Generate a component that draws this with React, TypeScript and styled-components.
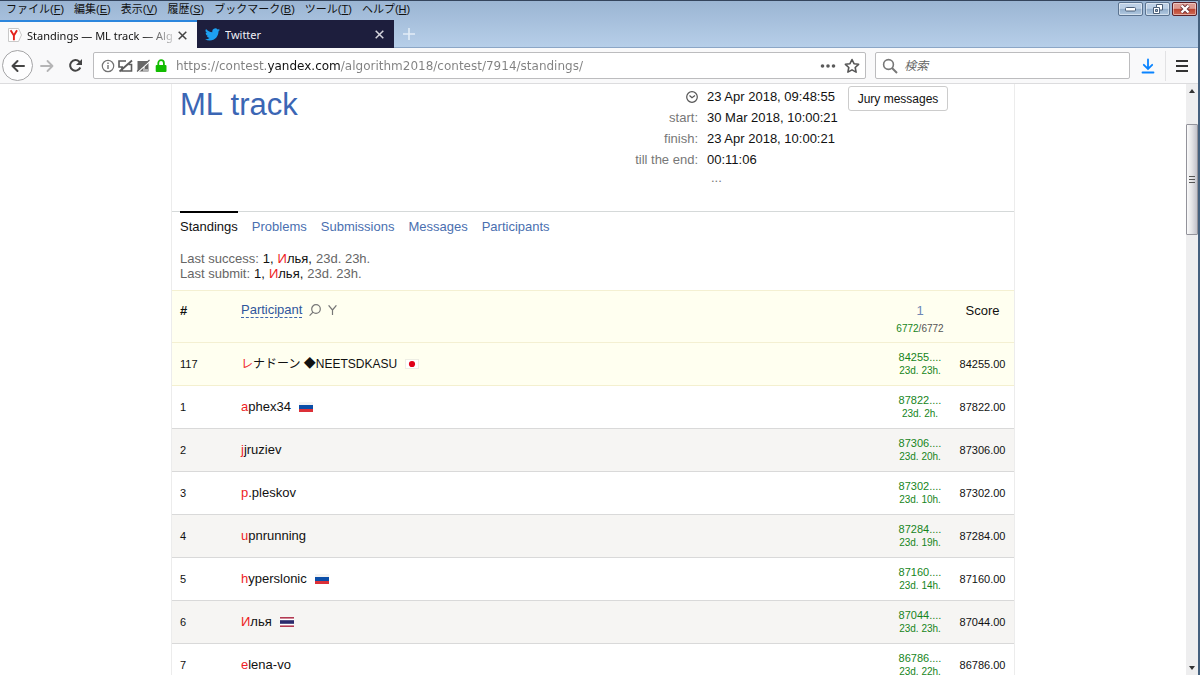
import React from "react";
import styled, { createGlobalStyle } from "styled-components";

const sans = `"Liberation Sans", Arial, "Noto Sans CJK JP", sans-serif`;
const ui = `"DejaVu Sans", Verdana, "Noto Sans CJK JP", sans-serif`;
const tabFont = `"Noto Sans", Tahoma, "Noto Sans CJK JP", sans-serif`;

const GlobalStyle = createGlobalStyle`
  * { box-sizing: border-box; }
  body { margin: 0; background: #fff; font-family: ${sans}; font-size: 13px; color: #111; }
  button, input { font: inherit; color: inherit; }
  button { padding: 0; border: 0; background: none; cursor: pointer; }
  svg { display: block; flex: none; }
`;

const Window = styled.div`
  display: flex;
  flex-direction: column;
  height: 100vh;
  overflow: hidden;
  border-right: 2px solid #44607e;
`;

const TitleArea = styled.header`
  background: linear-gradient(#9bb5d3, #b7cfe9);
  border-top: 1px solid #34445c;
`;

const MenuBar = styled.nav`
  display: flex;
  align-items: center;
  gap: 10px;
  height: 19px;
  padding: 0 0 4px 6px;
`;

const MenuItem = styled.button`
  font-size: 11px;
  line-height: 14px;
  white-space: nowrap;
  color: #111;
`;

const WindowButtons = styled.div`
  display: flex;
  align-self: flex-start;
  gap: 2px;
  margin: 1px 1px 0 auto;
`;

const WindowButton = styled.button<{ $close?: boolean }>`
  display: grid;
  place-items: center;
  width: 25px;
  height: 14px;
  border: 1px solid ${(p) => (p.$close ? "#5c2028" : "#5b7390")};
  border-radius: 2px;
  box-shadow: inset 0 0 0 1px rgba(255, 255, 255, 0.45);
  background: ${(p) =>
    p.$close
      ? "linear-gradient(#dd9a90 0 45%, #bd4430 50%, #cf6a55)"
      : "linear-gradient(#bdd0e6 0 45%, #93aecb 50%, #b3cae2)"};
`;

const TabStrip = styled.div`
  display: flex;
  height: 28px;
  border-bottom: 1px solid #8ba6c6;
`;

const Tab = styled.div<{ $active?: boolean }>`
  display: flex;
  align-items: center;
  flex: 0 1 197px;
  min-width: 0;
  gap: 5px;
  height: 28px;
  padding: 0 10px 0 8px;
  font-family: ${tabFont};
  font-size: 11px;
  border-top: ${(p) => (p.$active ? "2px solid #2c86dd" : "0")};
  background: ${(p) => (p.$active ? "#f9f9fa" : "#1d1e3d")};
  color: ${(p) => (p.$active ? "#111" : "#f0f0f5")};
`;

const TabTitle = styled.span<{ $fade?: boolean }>`
  flex: 1;
  min-width: 0;
  overflow: hidden;
  white-space: nowrap;
  ${(p) => p.$fade && "mask-image: linear-gradient(90deg, #000 80%, rgba(0, 0, 0, 0.2));"}
`;

const NewTab = styled.button`
  display: grid;
  place-items: center;
  width: 30px;
`;

const Toolbar = styled.div`
  display: flex;
  align-items: center;
  flex: none;
  height: 36px;
  padding-left: 2px;
  background: #f9f9fa;
  border-bottom: 1px solid #dcdcde;
`;

const BackButton = styled.button`
  display: grid;
  place-items: center;
  width: 31px;
  height: 31px;
  border: 1px solid #a4a4a6;
  border-radius: 50%;
  background: #fdfdfe;
`;

const ToolButton = styled.button<{ $width: number }>`
  display: grid;
  place-items: center;
  width: ${(p) => p.$width}px;
  height: 28px;
`;

const Field = styled.div<{ $grow: number }>`
  display: flex;
  align-items: center;
  flex: ${(p) => p.$grow} 1 0;
  min-width: 0;
  height: 27px;
  margin-right: 9px;
  padding: 0 0 0 6px;
  gap: 3px;
  border: 1px solid #bcbcbe;
  border-radius: 2px;
  background: #fff;
  font-family: ${ui};
  font-size: 12px;
`;

const UrlInput = styled.input`
  flex: 1;
  min-width: 0;
  margin-left: 4px;
  padding: 0;
  border: 0;
  outline: 0;
  color: #777;
  background: linear-gradient(90deg, #808080 92px, #111 92px 165px, #808080 165px);
  background-clip: text;
  -webkit-text-fill-color: transparent;
`;

const SearchInput = styled.input`
  flex: 1;
  min-width: 0;
  margin-left: 3px;
  padding: 0;
  border: 0;
  outline: 0;
  &::placeholder {
    font-style: italic;
    color: #666;
  }
`;

const Divider = styled.span`
  width: 1px;
  height: 30px;
  background: #e2e2e4;
`;

const Viewport = styled.div`
  display: flex;
  flex: 1;
  min-height: 0;
`;

const Scroller = styled.main`
  flex: 1;
  overflow: hidden;
  background: #fff;
`;

const Sheet = styled.div`
  max-width: 844px;
  margin: 0 auto;
  border: solid #ececec;
  border-width: 0 1px;
`;

const ContestHeader = styled.section`
  display: flex;
  align-items: flex-start;
  height: 127px;
  padding: 2px 66px 0 8px;
`;

const Title = styled.h1`
  flex: 1;
  margin: 0;
  font-size: 31px;
  font-weight: 400;
  line-height: 38px;
  color: #3b66b4;
`;

const Times = styled.dl`
  display: grid;
  grid-template-columns: auto 126px;
  column-gap: 9px;
  margin: 0 15px 0 0;
  line-height: 21px;
  white-space: nowrap;
`;

const TimeLabel = styled.dt`
  display: flex;
  align-items: center;
  justify-content: flex-end;
  color: #777;
`;

const TimeValue = styled.dd`
  margin: 0;
`;

const More = styled.button`
  grid-column: 2;
  justify-self: start;
  margin-left: 4px;
  line-height: 16px;
  color: #777;
`;

const JuryButton = styled.button`
  width: 100px;
  height: 25px;
  border: 1px solid #ccc;
  border-radius: 3px;
  background: #fff;
  font-size: 12px;
`;

const Nav = styled.nav`
  display: flex;
  gap: 14px;
  padding-left: 8px;
  border-top: 1px solid #d5d9d9;
`;

const NavLink = styled.a<{ $active?: boolean }>`
  margin-top: -1px;
  padding-top: 5px;
  border-top: 2px solid ${(p) => (p.$active ? "#000" : "transparent")};
  line-height: 18px;
  text-decoration: none;
  color: ${(p) => (p.$active ? "#111" : "#4a6fb0")};
`;

const LastInfo = styled.div`
  padding: 15px 8px 9px;
  line-height: 15px;
  color: #666;
`;

const LastLine = styled.p`
  display: flex;
  gap: 4px;
  margin: 0;
`;

const Dark = styled.span`
  color: #111;
`;

const Red = styled.span`
  color: #ee1c25;
`;

const Standings = styled.table`
  width: 100%;
  border-collapse: collapse;
  table-layout: fixed;
`;

const Row = styled.tr<{ $tone: "own" | "plain" | "striped" }>`
  height: 43px;
  background: ${(p) => ({ own: "#fffff0", plain: "#fff", striped: "#f6f5f3" })[p.$tone]};
  border-bottom: 1px solid ${(p) => (p.$tone === "own" ? "#f4f0cf" : "#d9d9d9")};
`;

const HeadRow = styled.tr`
  height: 52px;
  background: #fffff0;
  border: solid #f4f0d2;
  border-width: 1px 0;
`;

const HeadCell = styled.th<{ $width?: number; $align?: "center"; $bold?: boolean }>`
  width: ${(p) => (p.$width ? `${p.$width}px` : "auto")};
  padding: ${(p) => (p.$align ? "11px 0 0" : "11px 0 0 8px")};
  vertical-align: top;
  text-align: ${(p) => p.$align ?? "left"};
  font-weight: ${(p) => (p.$bold ? 700 : 400)};
  line-height: 18px;
`;

const HeadFlex = styled.div`
  display: flex;
  align-items: center;
  gap: 7px;
`;

const SortLink = styled.a`
  line-height: 15px;
  border-bottom: 1px dashed #3d66ad;
  text-decoration: none;
  color: #2f569c;
`;

const TaskLink = styled.a`
  display: block;
  margin-bottom: 2px;
  text-decoration: none;
  color: #6f87b5;
`;

const Small = styled.div<{ $color?: string }>`
  font-size: 10px;
  line-height: 13px;
  color: ${(p) => p.$color ?? "#16851b"};
`;

const Solved = styled.span`
  color: #16851b;
`;

const Rank = styled.td`
  padding: 0 0 0 8px;
  font-size: 11px;
`;

const NameCell = styled.td<{ $small?: boolean }>`
  padding: 0 0 0 8px;
  font-size: ${(p) => (p.$small ? 12 : 13)}px;
`;

const NameFlex = styled.div`
  display: flex;
  align-items: center;
  gap: 8px;
  line-height: 18px;
`;

const Result = styled.td`
  padding: 0;
  text-align: center;
  font-size: 11px;
  line-height: 13px;
  color: #16851b;
`;

const Score = styled.td`
  padding: 0;
  text-align: center;
  font-size: 11px;
`;

const Scrollbar = styled.div`
  display: flex;
  flex-direction: column;
  align-items: center;
  justify-content: space-between;
  flex: none;
  width: 12px;
  padding: 5px 0;
  background: #eeeeef;
`;

const ThumbTrack = styled.div`
  flex: 1;
  width: 12px;
  padding-top: 31px;
`;

const Thumb = styled.div`
  display: grid;
  place-items: center;
  height: 111px;
  border: 1px solid #93939b;
  border-radius: 1px;
  background: linear-gradient(90deg, #fafafa, #e3e3e6 50%, #c2c2ca);
`;

type Flag = "jp" | "ru" | "th";

const FlagIcon = ({ code }: { code: Flag }) => (
  <svg width="14" height="10" viewBox="0 0 14 10" role="img" aria-label={code}>
    {code === "jp" && (
      <>
        <rect x=".5" y=".5" width="13" height="9" fill="#fff" stroke="#eeeee4" />
        <circle cx="7" cy="5" r="3.1" fill="#e00018" />
      </>
    )}
    {code === "ru" && (
      <>
        <rect width="14" height="10" fill="#f2f2f2" />
        <rect y="3" width="14" height="4" fill="#0b4ea8" />
        <rect y="7" width="14" height="3" fill="#dc3038" />
      </>
    )}
    {code === "th" && (
      <>
        <rect width="14" height="10" fill="#b23a52" />
        <rect y="1.6" width="14" height="6.8" fill="#fff" />
        <rect y="3.2" width="14" height="3.6" fill="#2b2a6c" />
      </>
    )}
  </svg>
);

const CloseIcon = ({ color }: { color: string }) => (
  <svg width="9" height="9" viewBox="0 0 9 9" stroke={color} strokeWidth="1.5">
    <path d="M.7.7l7.6 7.6M8.3.7L.7 8.3" />
  </svg>
);

const YandexIcon = () => (
  <svg width="14" height="14" viewBox="0 0 14 14" fill="none">
    <path d="M.5.5h10l3 6.5-3 6.500H.5z" fill="#fff" stroke="#c9c9c9" />
    <path d="M2.600 2.200l3.300 5.300v4.700M9 2.200L5.900 7.500" stroke="#e4231c" strokeWidth="1.900" />
  </svg>
);

const TwitterIcon = () => (
  <svg width="15" height="15" viewBox="0 0 24 24" fill="#1da1f2">
    <path d="M23.950 4.570a10 10 0 0 1-2.820.770 4.960 4.960 0 0 0 2.160-2.720c-.950.560-2 .970-3.130 1.190a4.920 4.920 0 0 0-8.380 4.480C7.690 8.090 4.070 6.130 1.640 3.160a4.920 4.920 0 0 0 1.520 6.570 4.900 4.900 0 0 1-2.230-.610v.060a4.920 4.920 0 0 0 3.950 4.830 5 5 0 0 1-2.210.080 4.940 4.940 0 0 0 4.600 3.420A9.870 9.870 0 0 1 0 19.540a13.940 13.940 0 0 0 7.550 2.210c9.050 0 14-7.500 14-13.980 0-.210 0-.420-.020-.630a9.940 9.940 0 0 0 2.420-2.570z" />
  </svg>
);

const SecurityIcons = () => (
  <svg width="69" height="16" viewBox="0 0 69 16" fill="none">
    <circle cx="8" cy="8" r="5.700" stroke="#737373" strokeWidth="1.200" />
    <path d="M8 7v4M8 4.500v1.400" stroke="#737373" strokeWidth="1.400" />
    <path d="M26 3h-7v6h4M22 9.500v3.500h9.500V6.500h-3" stroke="#5c5c5c" strokeWidth="1.600" />
    <path d="M19.500 13.500L32 2.500" stroke="#5c5c5c" strokeWidth="1.800" />
    <path d="M37.500 3h11v10.500h-11z" fill="#676767" />
    <path d="M37.500 14.500L50 3M41 10h4M43 12h5" stroke="#fff" strokeWidth="1.200" />
    <path d="M37 13.500L49.500 2" stroke="#676767" strokeWidth="1.200" />
    <path d="M58.300 7V5a2.800 2.800 0 0 1 5.600 0v2" stroke="#12bc00" strokeWidth="1.800" />
    <rect x="55.700" y="7" width="10.800" height="7" rx="1" fill="#12bc00" />
  </svg>
);

interface Entry {
  rank: number;
  name: string;
  flag?: Flag;
  score: number;
  time: string;
}

const own: Entry = { rank: 117, name: "レナドーン ◆NEETSDKASU", flag: "jp", score: 84255, time: "23d. 23h." };

const entries: Entry[] = [
  { rank: 1, name: "aphex34", flag: "ru", score: 87822, time: "23d. 2h." },
  { rank: 2, name: "jjruziev", score: 87306, time: "23d. 20h." },
  { rank: 3, name: "p.pleskov", score: 87302, time: "23d. 10h." },
  { rank: 4, name: "upnrunning", score: 87284, time: "23d. 19h." },
  { rank: 5, name: "hyperslonic", flag: "ru", score: 87160, time: "23d. 14h." },
  { rank: 6, name: "Илья", flag: "th", score: 87044, time: "23d. 23h." },
  { rank: 7, name: "elena-vo", score: 86786, time: "23d. 22h." },
];

const menus: [string, string][] = [
  ["ファイル", "F"],
  ["編集", "E"],
  ["表示", "V"],
  ["履歴", "S"],
  ["ブックマーク", "B"],
  ["ツール", "T"],
  ["ヘルプ", "H"],
];

const UserName = ({ name }: { name: string }) => (
  <Dark>
    <Red>{name[0]}</Red>
    {name.slice(1)}
  </Dark>
);

const EntryRow = ({ entry, tone }: { entry: Entry; tone: "own" | "plain" | "striped" }) => (
  <Row $tone={tone}>
    <Rank>{entry.rank}</Rank>
    <NameCell $small={tone === "own"}>
      <NameFlex>
        <UserName name={entry.name} />
        {entry.flag && <FlagIcon code={entry.flag} />}
      </NameFlex>
    </NameCell>
    <Result>
      {entry.score}....
      <Small>{entry.time}</Small>
    </Result>
    <Score>{entry.score}.00</Score>
  </Row>
);

const BrowserChrome = () => (
  <>
    <TitleArea>
      <MenuBar>
        {menus.map(([label, key]) => (
          <MenuItem key={key}>
            {label}(<u>{key}</u>)
          </MenuItem>
        ))}
        <WindowButtons>
          <WindowButton aria-label="Minimize">
            <svg width="11" height="5" viewBox="0 0 11 5">
              <rect x=".5" y=".5" width="10" height="3.500" rx="1" fill="#fff" stroke="#4b5f78" />
            </svg>
          </WindowButton>
          <WindowButton aria-label="Restore">
            <svg width="12" height="10" viewBox="0 0 12 10" fill="#fff" stroke="#4b5f78">
              <path d="M4.500.5h6v5.500h-6z" />
              <path d="M1.500 3.500h6v6h-6z" />
              <path d="M3.500 5.500h2v2h-2z" fill="#93aecb" />
            </svg>
          </WindowButton>
          <WindowButton $close aria-label="Close">
            <svg width="12" height="10" viewBox="0 0 12 10">
              <path d="M2.500 1.500l7 7M9.500 1.500l-7 7" stroke="#6b3038" strokeWidth="4" />
              <path d="M2.500 1.500l7 7M9.500 1.500l-7 7" stroke="#fff" strokeWidth="2.400" />
            </svg>
          </WindowButton>
        </WindowButtons>
      </MenuBar>
      <TabStrip>
        <Tab $active>
          <YandexIcon />
          <TabTitle $fade>Standings — ML track — Alg</TabTitle>
          <button aria-label="Close tab"><CloseIcon color="#444" /></button>
        </Tab>
        <Tab>
          <TwitterIcon />
          <TabTitle>Twitter</TabTitle>
          <button aria-label="Close tab"><CloseIcon color="#d5d5dd" /></button>
        </Tab>
        <NewTab aria-label="New tab">
          <svg width="12" height="12" viewBox="0 0 12 12" stroke="#e3edf7" strokeWidth="1.600">
            <path d="M6 0v12M0 6h12" />
          </svg>
        </NewTab>
      </TabStrip>
    </TitleArea>
    <Toolbar>
      <BackButton aria-label="Back">
        <svg width="14" height="14" viewBox="0 0 14 14" fill="none" stroke="#444" strokeWidth="2" strokeLinecap="round" strokeLinejoin="round">
          <path d="M13 7H1.500M6.500 2l-5 5 5 5" />
        </svg>
      </BackButton>
      <ToolButton $width={28} aria-label="Forward">
        <svg width="14" height="14" viewBox="0 0 14 14" fill="none" stroke="#b5b5b6" strokeWidth="1.800" strokeLinecap="round" strokeLinejoin="round">
          <path d="M1 7h11.500M7.500 2l5 5-5 5" />
        </svg>
      </ToolButton>
      <ToolButton $width={28} aria-label="Reload">
        <svg width="15" height="15" viewBox="0 0 15 15" fill="none">
          <path d="M12.300 9.500A5.300 5.300 0 1 1 11.300 3.700L12 4.500" stroke="#444" strokeWidth="2" />
          <path d="M14 1v6H8z" fill="#444" />
        </svg>
      </ToolButton>
      <ToolButton as="span" $width={4} />
      <Field $grow={766}>
        <SecurityIcons />
        <UrlInput aria-label="Address" defaultValue="https://contest.yandex.com/algorithm2018/contest/7914/standings/" />
        <button aria-label="Page actions">
          <svg width="16" height="4" viewBox="0 0 16 4" fill="#5a5a5a">
            <circle cx="2.500" cy="2" r="1.800" />
            <circle cx="8" cy="2" r="1.800" />
            <circle cx="13.500" cy="2" r="1.800" />
          </svg>
        </button>
        <ToolButton $width={26} aria-label="Bookmark this page">
          <svg width="16" height="16" viewBox="0 0 16 16" fill="none" stroke="#555" strokeWidth="1.600" strokeLinejoin="round">
            <path d="M8 1.500l2 4.200 4.600.600-3.400 3.200.900 4.600L8 11.900l-4.100 2.200.900-4.600L1.400 6.300 6 5.700z" />
          </svg>
        </ToolButton>
      </Field>
      <Field $grow={247}>
        <svg width="16" height="16" viewBox="0 0 16 16" fill="none" stroke="#777" strokeWidth="1.600">
          <circle cx="6.500" cy="6.500" r="4.900" />
          <path d="M10 10l5 5" strokeWidth="2" />
        </svg>
        <SearchInput aria-label="Search" placeholder="検索" />
      </Field>
      <ToolButton $width={18} aria-label="Downloads">
        <svg width="14" height="16" viewBox="0 0 14 16" fill="none" stroke="#0a84ff" strokeWidth="1.800" strokeLinecap="round">
          <path d="M7 1.500v9M2.800 6.800L7 11l4.200-4.200M1.500 14.500h11" />
        </svg>
      </ToolButton>
      <ToolButton as="span" $width={8} />
      <Divider />
      <ToolButton $width={32} aria-label="Menu">
        <svg width="12" height="12" viewBox="0 0 12 12" stroke="#333" strokeWidth="2">
          <path d="M0 1h12M0 6h12M0 11h12" />
        </svg>
      </ToolButton>
    </Toolbar>
  </>
);

export default function App() {
  return (
    <Window>
      <GlobalStyle />
      <BrowserChrome />
      <Viewport>
        <Scroller>
          <Sheet>
            <ContestHeader>
              <Title>ML track</Title>
              <Times>
                <TimeLabel>
                  <svg width="12" height="12" viewBox="0 0 12 12" fill="none" stroke="#555" role="img" aria-label="now">
                    <circle cx="6" cy="6" r="5.300" strokeWidth="1.200" />
                    <path d="M3.500 4.500L6 6.700l3-2.200" strokeWidth="1.200" />
                  </svg>
                </TimeLabel>
                <TimeValue>23 Apr 2018, 09:48:55</TimeValue>
                <TimeLabel>start:</TimeLabel>
                <TimeValue>30 Mar 2018, 10:00:21</TimeValue>
                <TimeLabel>finish:</TimeLabel>
                <TimeValue>23 Apr 2018, 10:00:21</TimeValue>
                <TimeLabel>till the end:</TimeLabel>
                <TimeValue>00:11:06</TimeValue>
                <More>...</More>
              </Times>
              <JuryButton>Jury messages</JuryButton>
            </ContestHeader>
            <Nav>
              <NavLink href="#standings" $active>Standings</NavLink>
              <NavLink href="#problems">Problems</NavLink>
              <NavLink href="#submissions">Submissions</NavLink>
              <NavLink href="#messages">Messages</NavLink>
              <NavLink href="#participants">Participants</NavLink>
            </Nav>
            <LastInfo>
              {["Last success:", "Last submit:"].map((label) => (
                <LastLine key={label}>
                  <span>{label}</span>
                  <Dark>1,</Dark>
                  <Dark><UserName name="Илья" />,</Dark>
                  <span>23d. 23h.</span>
                </LastLine>
              ))}
            </LastInfo>
            <Standings>
              <thead>
                <HeadRow>
                  <HeadCell $width={61} $bold>#</HeadCell>
                  <HeadCell>
                    <HeadFlex>
                      <SortLink href="#participant">Participant</SortLink>
                      <svg width="12" height="12" viewBox="0 0 12 12" fill="none" stroke="#777" strokeWidth="1.200">
                        <circle cx="7" cy="5" r="4.300" />
                        <path d="M4 8.200L.6 11.600" />
                      </svg>
                      <svg width="9" height="10" viewBox="0 0 9 10" fill="none" stroke="#777" strokeWidth="1.200">
                        <path d="M.6.300l3.900 4.700v5M8.400.300L4.500 5" />
                      </svg>
                    </HeadFlex>
                  </HeadCell>
                  <HeadCell $width={62} $align="center">
                    <TaskLink href="#task-1">1</TaskLink>
                    <Small $color="#555"><Solved>6772</Solved>/6772</Small>
                  </HeadCell>
                  <HeadCell $width={63} $align="center">Score</HeadCell>
                </HeadRow>
              </thead>
              <tbody>
                <EntryRow entry={own} tone="own" />
                {entries.map((entry, i) => (
                  <EntryRow key={entry.rank} entry={entry} tone={i % 2 ? "striped" : "plain"} />
                ))}
              </tbody>
            </Standings>
          </Sheet>
        </Scroller>
        <Scrollbar>
          <svg width="6" height="4" viewBox="0 0 6 4" fill="#333"><path d="M3 0l3 4H0z" /></svg>
          <ThumbTrack>
            <Thumb>
              <svg width="6" height="8" viewBox="0 0 6 8" stroke="#555"><path d="M0 .5h6M0 3.500h6M0 6.500h6" /></svg>
            </Thumb>
          </ThumbTrack>
          <svg width="6" height="4" viewBox="0 0 6 4" fill="#333"><path d="M3 4l3-4H0z" /></svg>
        </Scrollbar>
      </Viewport>
    </Window>
  );
}
